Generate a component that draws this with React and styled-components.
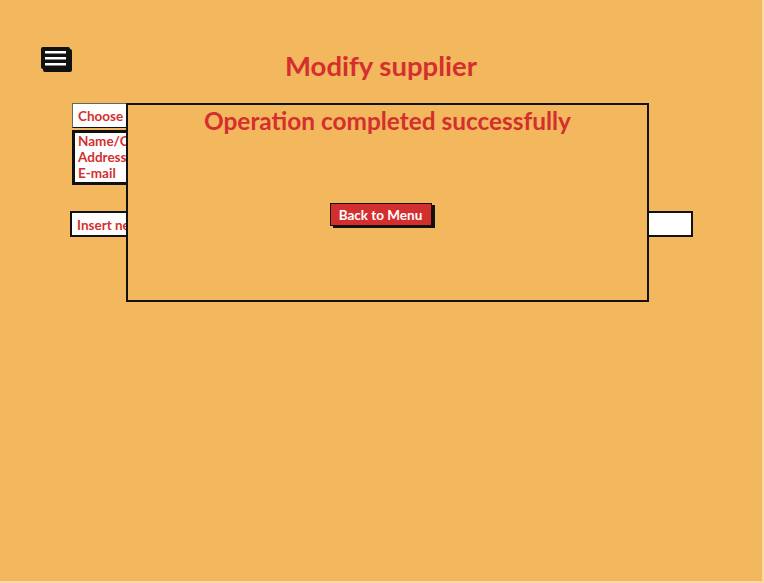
import styled, { createGlobalStyle } from "styled-components"

const GlobalStyle = createGlobalStyle`
  body {
    margin: 0;
    background: #f3b75e;
    font-family: Lato, "Noto Sans", "Liberation Sans", sans-serif;
  }
  * { box-sizing: border-box; }
`

const Page = styled.div`
  position: relative;
  width: 764px;
  height: 583px;
  background-color: #f3b75e;
  border-right: 2px solid #f7d9a6;
  border-bottom: 2px solid #f7d9a6;
`

const Header = styled.div`
  display: grid;
  grid-template-columns: 1fr auto 1fr;
  align-items: start;
  padding-top: 46px;
`

const MenuButton = styled.div`
  justify-self: start;
  margin-left: 40px;
  width: 33px;
  height: 27px;
`

const Title = styled.h1`
  margin: 5px 0 0;
  font-size: 27.5px;
  line-height: 30px;
  font-weight: 700;
  color: #d32f2f;
`

const Form = styled.div`
  display: flex;
  flex-direction: column;
  padding: 22px 0 0 72px;
`

const borders = {
  thin: "1.5px solid #111; border-top-color: #666; border-left-color: #666",
  thick: "3px solid #111",
  input: "2px solid #111",
}

const Field = styled.div`
  width: ${p => p.$width || 300}px;
  margin-left: ${p => p.$shift || 0}px;
  margin-top: ${p => p.$gap || 0}px;
  height: ${p => p.$height || 25}px;
  background: #fff;
  border: ${p => borders[p.$kind || "thin"]};
  padding: ${p => p.$kind === "thick" ? "0 3px" : "4px 5px"};
  color: #d32f2f;
  font-size: 13.5px;
  line-height: 16px;
  font-weight: 700;
  white-space: nowrap;
  overflow: hidden;
`

const Modal = styled.div`
  position: absolute;
  left: 126px;
  top: 103px;
  width: 523px;
  height: 199px;
  background: #f3b75e;
  border: 2px solid #111;
  display: flex;
  flex-direction: column;
  align-items: center;
`

const ModalTitle = styled.h2`
  margin: 2px 0 0;
  font-size: 24.4px;
  line-height: 28px;
  font-weight: 700;
  color: #d32f2f;
`

const Button = styled.button`
  margin: 68px 14px 0 0;
  width: 102px;
  height: 23px;
  padding: 0;
  border: 1.5px solid #111;
  background: #d32f2f;
  color: #fff;
  font-family: inherit;
  font-size: 13.5px;
  font-weight: 700;
  box-shadow: 3px 2px 0 #111;
`

const MenuIcon = () => (
  <svg width="33" height="27" viewBox="0 0 33 27">
    <rect x="3" y="3" width="29" height="23" rx="2" fill="#111" />
    <rect x="1" y="1" width="29" height="22" rx="2" fill="#111" />
    <rect x="5" y="5" width="21" height="2.5" fill="#fff" />
    <rect x="5" y="11" width="21" height="2.5" fill="#fff" />
    <rect x="5" y="17" width="21" height="2.5" fill="#fff" />
  </svg>
)

const App = () => {
  return (
    <Page>
      <GlobalStyle />
      <Header>
        <MenuButton><MenuIcon /></MenuButton>
        <Title>Modify supplier</Title>
        <div />
      </Header>
      <Form>
        <Field>Choose supplier</Field>
        <Field $kind="thick" $height={55} $gap={2}>
          Name/Company<br />Address<br />E-mail
        </Field>
        <Field $kind="input" $width={623} $shift={-2} $gap={26} $height={26}>
          Insert new value
        </Field>
      </Form>
      <Modal>
        <ModalTitle>Operation completed successfully</ModalTitle>
        <Button>Back to Menu</Button>
      </Modal>
    </Page>
  )
}

export default App
